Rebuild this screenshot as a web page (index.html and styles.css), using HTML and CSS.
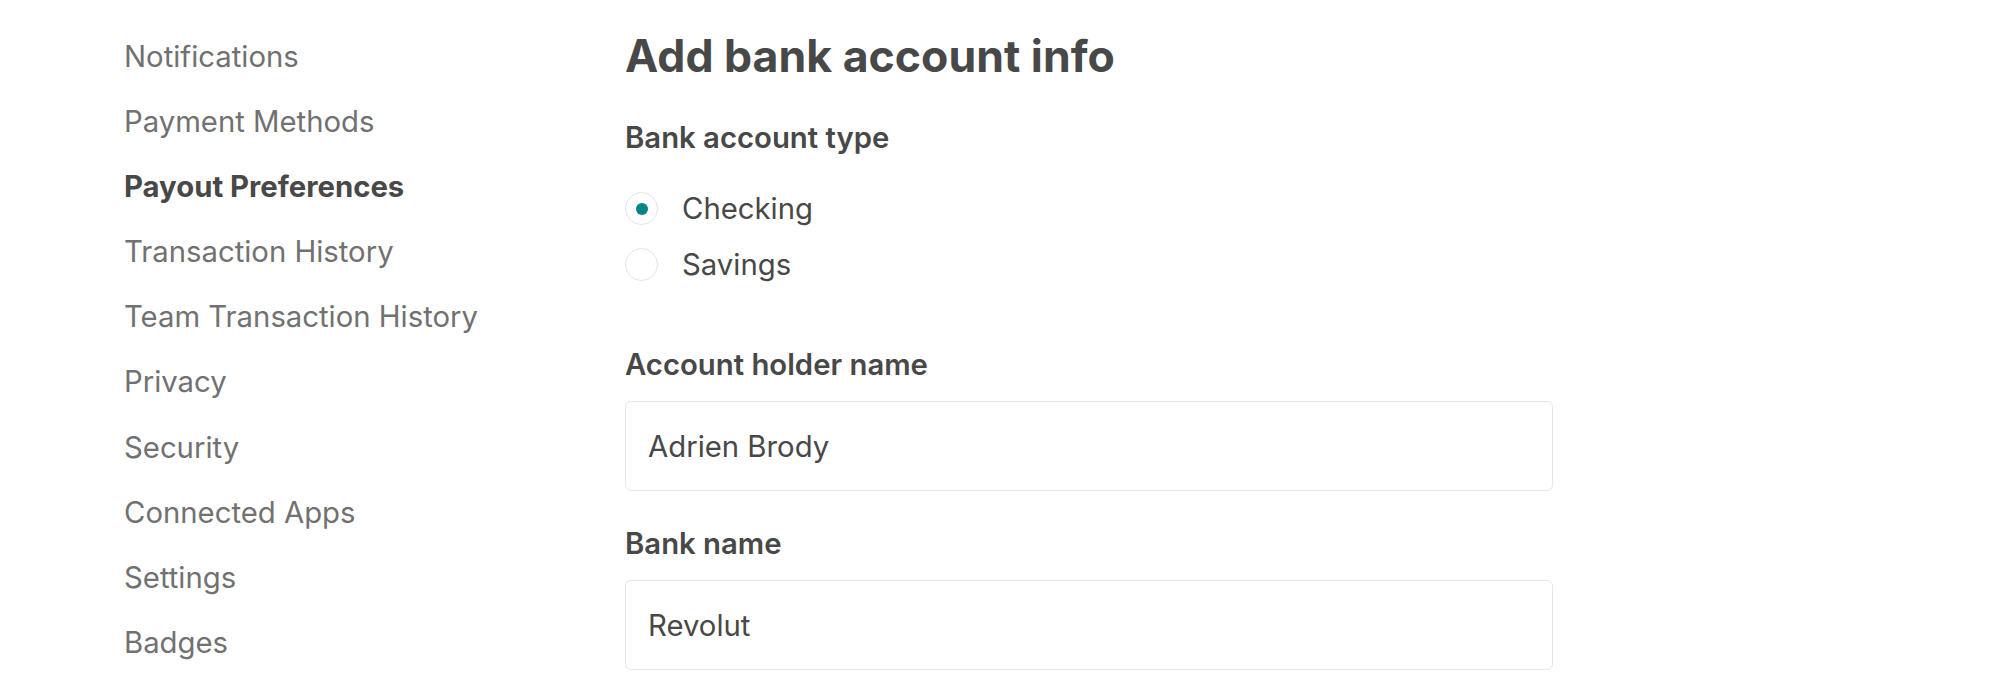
FILE: index.html
```html
<!DOCTYPE html>
<html lang="en">
<head>
  <meta charset="UTF-8" />
  <title>Payout Preferences</title>
  <link rel="stylesheet" href="styles.css">
</head>
<body>
  <div class="page">
    <nav class="side-nav">
      <a href="#">Notifications</a>
      <a href="#">Payment Methods</a>
      <a href="#" class="active">Payout Preferences</a>
      <a href="#">Transaction History</a>
      <a href="#">Team Transaction History</a>
      <a href="#">Privacy</a>
      <a href="#">Security</a>
      <a href="#">Connected Apps</a>
      <a href="#">Settings</a>
      <a href="#">Badges</a>
    </nav>

    <main class="content">
      <h1 class="title">Add bank account info</h1>

      <div class="field-label">Bank account type</div>
      <div class="radio-group">
        <label class="radio">
          <span class="radio-circle checked"></span>
          <span class="radio-text">Checking</span>
        </label>
        <label class="radio">
          <span class="radio-circle"></span>
          <span class="radio-text">Savings</span>
        </label>
      </div>

      <div class="field">
        <div class="field-label">Account holder name</div>
        <div class="text-input">Adrien Brody</div>
      </div>

      <div class="field">
        <div class="field-label">Bank name</div>
        <div class="text-input">Revolut</div>
      </div>
    </main>
  </div>
</body>
</html>
```

FILE: styles.css
```css
* {
  margin: 0;
  padding: 0;
  box-sizing: border-box;
}

body {
  background: #fff;
  font-family: Inter, 'Noto Sans', sans-serif;
  color: #484848;
}

.page {
  display: flex;
  padding-left: 124px;
}

/* left menu */
.side-nav {
  width: 501px;
  display: flex;
  flex-direction: column;
  padding-top: 24px;
}

.side-nav a {
  font-size: 29.3px;
  line-height: 65.1px;
  color: #717171;
  text-decoration: none;
}

.side-nav a.active {
  font-weight: 700;
  color: #484848;
}

/* form */
.content {
  width: 928px;
  padding-top: 21px;
}

.title {
  font-size: 44.6px;
  font-weight: 700;
  line-height: 70px;
  margin-bottom: 25px;
}

.field-label {
  font-size: 29.3px;
  font-weight: 600;
  line-height: 44px;
}

.radio-group {
  display: flex;
  flex-direction: column;
  gap: 23px;
  margin: 32px 0 62px;
}

.radio {
  display: flex;
  align-items: center;
  gap: 24px;
  font-size: 29.3px;
  line-height: 33px;
}

.radio-circle {
  width: 33px;
  height: 33px;
  border: 1px solid #e4e4e4;
  border-radius: 50%;
  display: flex;
  align-items: center;
  justify-content: center;
}

.radio-circle.checked::after {
  content: "";
  width: 12px;
  height: 12px;
  border-radius: 50%;
  background: #008489;
}

.field {
  margin-bottom: 31px;
}

.text-input {
  margin-top: 14px;
  height: 90px;
  border: 1px solid #e6e6e6;
  border-radius: 6px;
  padding: 0 22px;
  display: flex;
  align-items: center;
  font-size: 29.3px;
}
```
